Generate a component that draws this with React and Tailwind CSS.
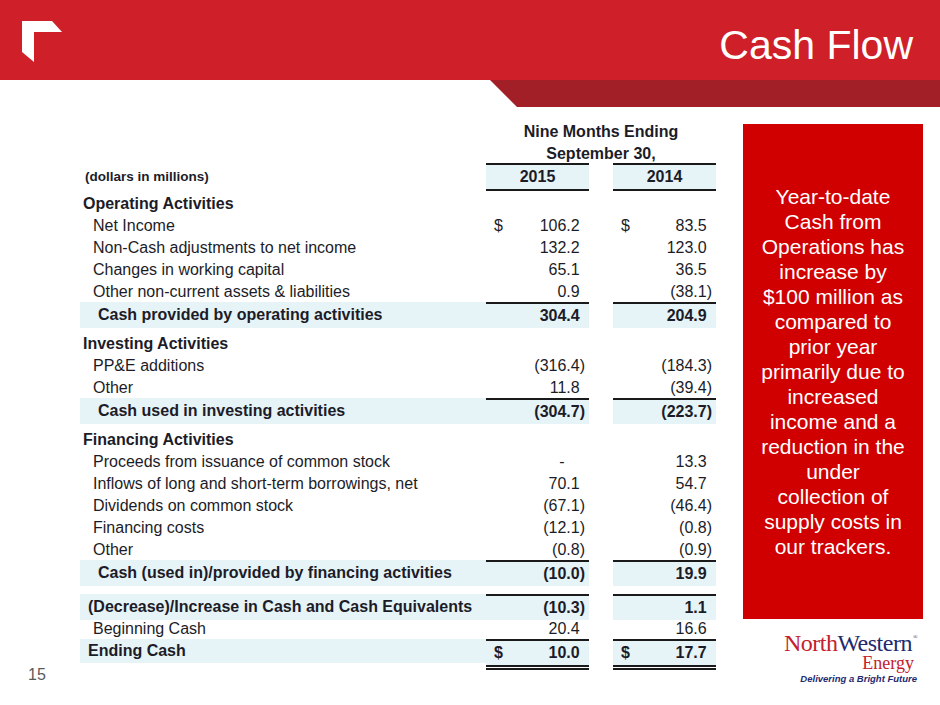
import React from "react";

const BAND = "bg-[#e6f3f7]";
const COLS = "grid grid-cols-[406px_103px_24px_103px]";

// one money cell, the ")" placeholder keeps positives lined up with negatives
const Val = ({ v, dollar, band, line, dbl, bold }) => {
    const neg = v.startsWith("(");
    return (
        <div
            className={`flex items-center pl-[8px] pr-[4px] ${bold ? "font-bold" : ""} ${band ? BAND : ""} ${line ? "border-t-2 border-[#1a1a1a]" : ""} ${dbl ? "border-b-[5px] [border-bottom-style:double] border-[#1a1a1a] bg-clip-padding" : ""}`}
        >
            {dollar && <span>$</span>}
            <span className={`ml-auto ${v === "-" ? "mr-[15px]" : ""}`}>
                {v}
                {!neg && <span className="invisible">)</span>}
            </span>
        </div>
    );
};

const Row = ({ label, pl, h, bold, band, line, dbl, a, b, dollar, className = "" }) => (
    <div className={`${COLS} ${h} ${className}`}>
        <div
            className={`flex items-center whitespace-nowrap ${pl} ${bold ? "font-bold" : ""} ${band ? BAND : ""} ${dbl ? "self-start h-[24px]" : ""}`}
        >
            {label}
        </div>
        {a !== undefined ? (
            <Val v={a} dollar={dollar} band={band} line={line} dbl={dbl} bold={bold} />
        ) : (
            <div />
        )}
        <div />
        {b !== undefined ? (
            <Val v={b} dollar={dollar} band={band} line={line} dbl={dbl} bold={bold} />
        ) : (
            <div />
        )}
    </div>
);

const Heading = ({ children, className = "" }) => (
    <Row label={children} pl="pl-[3px]" h="h-[22px]" bold className={className} />
);

const Item = (props) => <Row pl="pl-[13px]" h="h-[22px]" {...props} />;

const Subtotal = (props) => (
    <Row pl="pl-[18px]" h="h-[23px]" bold band line {...props} />
);

const LogoMark = () => (
    <svg width="41" height="42" viewBox="22 21 41 42">
        <polygon points="22,21 52,21 62,32 34,32 34,62 22,52" fill="#ffffff" />
    </svg>
);

const App = () => {
    return (
        <div className="w-[940px] h-[705px] overflow-hidden bg-white text-[#1c1c28] font-['Liberation_Sans',Arial,sans-serif]">
            {/* header */}
            <div className="flex items-start justify-between h-[80px] bg-[#cf1f29] pl-[22px] pr-[27px] pt-[21px]">
                <LogoMark />
                <h1 className="mt-[4px] text-[41px] leading-none text-white">Cash Flow</h1>
            </div>
            <div className="ml-[490px] h-[27px] bg-[#a31f27] [clip-path:polygon(0_0,100%_0,100%_100%,27px_100%)]" />

            <div className="flex mt-[13px]">
                {/* table */}
                <div className="flex flex-col">
                    <div className="ml-[80px] w-[636px] text-[16px]">
                        <div className={`${COLS} h-[22px] font-bold`}>
                            <div className="col-start-2 col-span-3 flex items-center justify-center">
                                Nine Months Ending
                            </div>
                        </div>
                        <div className={`${COLS} h-[21px] font-bold`}>
                            <div className="col-start-2 col-span-3 flex items-center justify-center">
                                September 30,
                            </div>
                        </div>
                        <div className={`${COLS} h-[24px] font-bold`}>
                            <div className="flex items-center pl-[5px] text-[13.5px]">
                                (dollars in millions)
                            </div>
                            <div className={`flex items-center justify-center border-y-2 border-[#1a1a1a] ${BAND}`}>
                                2015
                            </div>
                            <div />
                            <div className={`flex items-center justify-center border-y-2 border-[#1a1a1a] ${BAND}`}>
                                2014
                            </div>
                        </div>

                        <Heading className="mt-[5px]">Operating Activities</Heading>
                        <Item label="Net Income" a="106.2" b="83.5" dollar />
                        <Item label="Non-Cash adjustments to net income" a="132.2" b="123.0" />
                        <Item label="Changes in working capital" a="65.1" b="36.5" />
                        <Item label="Other non-current assets & liabilities" a="0.9" b="(38.1)" />
                        <Subtotal label="Cash provided by operating activities" a="304.4" b="204.9" />

                        <Heading className="mt-[7px]">Investing Activities</Heading>
                        <Item label="PP&E additions" a="(316.4)" b="(184.3)" />
                        <Item label="Other" a="11.8" b="(39.4)" />
                        <Subtotal label="Cash used in investing activities" a="(304.7)" b="(223.7)" />

                        <Heading className="mt-[7px]">Financing Activities</Heading>
                        <Item label="Proceeds from issuance of common stock" a="-" b="13.3" />
                        <Item label="Inflows of long and short-term borrowings, net" a="70.1" b="54.7" />
                        <Item label="Dividends on common stock" a="(67.1)" b="(46.4)" />
                        <Item label="Financing costs" a="(12.1)" b="(0.8)" />
                        <Item label="Other" a="(0.8)" b="(0.9)" />
                        <Subtotal
                            label="Cash (used in)/provided by financing activities"
                            a="(10.0)"
                            b="19.9"
                        />

                        <Row
                            label="(Decrease)/Increase in Cash and Cash Equivalents"
                            pl="pl-[8px]"
                            h="h-[23px]"
                            bold
                            band
                            line
                            a="(10.3)"
                            b="1.1"
                            className="mt-[11px]"
                        />
                        <Item label="Beginning Cash" a="20.4" b="16.6" />
                        <Row
                            label="Ending Cash"
                            pl="pl-[8px]"
                            h="h-[29px]"
                            bold
                            band
                            line
                            dbl
                            dollar
                            a="10.0"
                            b="17.7"
                        />
                    </div>
                    <div className="pl-[28px] text-[16px] leading-[14px] text-[#5a5a5a]">15</div>
                </div>

                {/* commentary + logo */}
                <div className="flex flex-col items-end ml-[27px] mt-[4px] w-[180px]">
                    <div className="flex items-center justify-center w-[180px] h-[495px] bg-[#d00000] text-white text-center text-[21px] leading-[25px]">
                        <p>
                            Year-to-date
                            <br />
                            Cash from
                            <br />
                            Operations has
                            <br />
                            increase by
                            <br />
                            $100 million as
                            <br />
                            compared to
                            <br />
                            prior year
                            <br />
                            primarily due to
                            <br />
                            increased
                            <br />
                            income and a
                            <br />
                            reduction in the
                            <br />
                            under
                            <br />
                            collection of
                            <br />
                            supply costs in
                            <br />
                            our trackers.
                        </p>
                    </div>
                    <div className="flex flex-col items-end pr-[6px] mt-[12px]">
                        <div className="flex items-start font-['Liberation_Serif',serif] text-[24px] leading-[24px] tracking-[-0.5px]">
                            <span className="text-[#c4202e]">North</span>
                            <span className="text-[#1f2a6e]">Western</span>
                            <span className="ml-[1px] mt-[3px] text-[6px] leading-none text-[#1f2a6e]">®</span>
                        </div>
                        <div className="mr-[3px] font-['Liberation_Serif',serif] text-[18px] leading-[16px] text-[#c4202e]">
                            Energy
                        </div>
                        <div className="mt-[3px] text-[9.5px] leading-[10px] font-bold italic text-[#1f2a6e]">
                            Delivering a Bright Future
                        </div>
                    </div>
                </div>
            </div>
        </div>
    );
};

export default App;
